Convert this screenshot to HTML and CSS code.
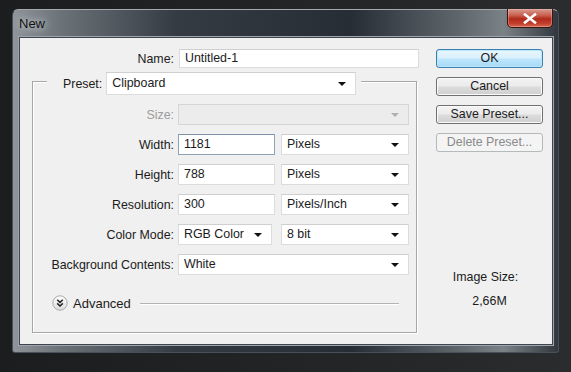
FILE: index.html
```html
<!DOCTYPE html>
<html lang="en">
<head>
    <meta charset="UTF-8">
    <title>New</title>
    <link rel="stylesheet" href="styles.css">
</head>
<body>
    <div class="window">
        <div class="titlebar">
            <span class="title">New</span>
            <div class="close">
                <svg width="14" height="11" viewBox="0 0 14 11">
                    <path d="M2 1.5 L12 9.5 M12 1.5 L2 9.5" stroke="#fff" stroke-width="2.6" stroke-linecap="square"/>
                </svg>
            </div>
        </div>

        <div class="client">
            <div class="form">
                <div class="name-row">
                    <span class="label">Name:</span>
                    <div class="field name-field">Untitled-1</div>
                </div>

                <div class="group">
                    <div class="preset">
                        <span class="label">Preset:</span>
                        <div class="field select preset-select">Clipboard</div>
                    </div>

                    <div class="rows">
                        <span class="label disabled">Size:</span>
                        <div class="field select span-2 is-disabled"></div>

                        <span class="label">Width:</span>
                        <div class="field num focused">1181</div>
                        <div class="field select">Pixels</div>

                        <span class="label">Height:</span>
                        <div class="field num">788</div>
                        <div class="field select">Pixels</div>

                        <span class="label">Resolution:</span>
                        <div class="field num">300</div>
                        <div class="field select">Pixels/Inch</div>

                        <span class="label">Color Mode:</span>
                        <div class="field select mode">RGB Color</div>
                        <div class="field select">8 bit</div>

                        <span class="label">Background Contents:</span>
                        <div class="field select span-2">White</div>
                    </div>

                    <div class="advanced">
                        <svg class="adv-icon" width="16" height="16" viewBox="0 0 16 16">
                            <defs>
                                <linearGradient id="advg" x1="0" y1="0" x2="0" y2="1">
                                    <stop offset="0" stop-color="#ffffff"/>
                                    <stop offset="1" stop-color="#dcdcdc"/>
                                </linearGradient>
                            </defs>
                            <circle cx="8" cy="8" r="7.2" fill="url(#advg)" stroke="#a9a9a9"/>
                            <path d="M5.2 4.8 L8 7.4 L10.8 4.8 M5.2 8.4 L8 11 L10.8 8.4" fill="none" stroke="#222" stroke-width="1.5"/>
                        </svg>
                        <span>Advanced</span>
                        <div class="adv-line"></div>
                    </div>
                </div>
            </div>

            <div class="side">
                <div class="btn primary">OK</div>
                <div class="btn">Cancel</div>
                <div class="btn">Save Preset...</div>
                <div class="btn is-disabled">Delete Preset...</div>

                <div class="info">
                    <div class="info-label">Image Size:</div>
                    <div class="info-value">2,66M</div>
                </div>
            </div>
        </div>
    </div>
</body>
</html>
```

FILE: styles.css
```css
body {
    margin: 0;
    background: linear-gradient(90deg, #1c1d1f 0%, #232527 60%, #2a2c2e 100%);
    font-family: "Liberation Sans", Arial, sans-serif;
    font-size: 12.4px;
    color: #1b1b1b;
    height: 372px;
    overflow: hidden;
}
.window {
    margin: 9px 0 0 12px;
    width: 547px;
    height: 344px;
    box-sizing: border-box;
    padding: 0 5px 8px 6px;
    border-radius: 6px 6px 3px 3px;
    border: 1px solid #4a5058;
    border-top-color: #a4a9ad;
    background: linear-gradient(90deg, #8f959a 0%, #6a7177 9%, #343b43 30%, #272d35 62%, #5f676d 82%, #7a8287 90%, #30373e 100%);
}
.titlebar {
    height: 27px;
    display: flex;
    align-items: flex-start;
    justify-content: space-between;
}
.title {
    margin: 6px 0 0 0;
    font-size: 13px;
    color: #111;
    text-shadow: 0 0 6px #c9cdd0, 0 0 10px #b5babd;
}
.close {
    width: 46px;
    height: 19px;
    margin: -1px 0 0 0;
    box-sizing: border-box;
    border: 1px solid #3c1612;
    border-top: none;
    border-radius: 0 0 5px 5px;
    background: linear-gradient(#d79b90 0%, #c9604f 35%, #b02a1b 55%, #c23e2c 80%, #d66a52 100%);
    box-shadow: inset 0 0 0 1px rgba(255, 210, 200, 0.35);
    display: flex;
    align-items: center;
    justify-content: center;
}
.client {
    height: 308px;
    box-sizing: border-box;
    background: #f0f0f0;
    border: 1px solid #3d4650;
    box-shadow: 0 0 0 1px #9ea4a9;
    display: flex;
    padding-top: 11px;
}
.form {
    width: 387px;
    margin-left: 12px;
}
.label {
    text-align: right;
    white-space: nowrap;
}
.label.disabled {
    color: #9c9c9c;
}
.name-row {
    display: grid;
    grid-template-columns: 142px 240px;
    column-gap: 5px;
    align-items: center;
}
.field {
    position: relative;
    height: 21px;
    box-sizing: border-box;
    background: #fff;
    border: 1px solid #dcdcdc;
    border-top-color: #cfcfcf;
    padding: 0 5px;
    line-height: 19px;
    white-space: nowrap;
}
.name-field {
    height: 19px;
    line-height: 17px;
}
.select::after {
    content: "";
    position: absolute;
    right: 9px;
    top: 8px;
    border-left: 4px solid transparent;
    border-right: 4px solid transparent;
    border-top: 4px solid #111;
}
.field.is-disabled {
    background: #ececec;
    border-color: #d6d6d6;
}
.field.is-disabled::after {
    border-top-color: #b0b0b0;
}
.focused {
    border-color: #8ea3b5;
    border-top-color: #7b93a8;
}
.group {
    margin-top: 13px;
    width: 385px;
    height: 252px;
    box-sizing: border-box;
    border: 1px solid #a6a6a6;
    box-shadow: inset 1px 1px 0 #fff, 1px 1px 0 #fff;
}
.preset {
    display: flex;
    width: fit-content;
    align-items: center;
    gap: 4px;
    margin: -10px 0 0 14px;
    padding: 0 5px 0 16px;
    background: #f0f0f0;
}
.preset-select {
    width: 250px;
    height: 23px;
    line-height: 21px;
    padding-left: 5px;
}
.preset-select::after {
    top: 9px;
}
.rows {
    margin-top: 9px;
    display: grid;
    grid-template-columns: 141px 99px 128px;
    grid-auto-rows: 21px;
    column-gap: 4px;
    row-gap: 9px;
    align-items: center;
}
.span-2 {
    grid-column: span 2;
}
.num {
    width: 97px;
}
.mode {
    width: 94px;
}
.advanced {
    margin: 20px 0 0 19px;
    display: flex;
    align-items: center;
    gap: 5px;
    font-size: 13px;
}
.adv-line {
    flex: 1;
    margin: 1px 17px 0 4px;
    height: 1px;
    background: #b4b4b4;
    box-shadow: 0 1px 0 #fff;
}
.side {
    width: 107px;
    margin-left: 17px;
    display: flex;
    flex-direction: column;
    gap: 9px;
}
.btn {
    height: 19px;
    box-sizing: border-box;
    border: 1px solid #707070;
    border-radius: 3px;
    background: linear-gradient(#f3f3f3 0%, #ebebeb 48%, #dcdcdc 52%, #cfcfcf 100%);
    box-shadow: inset 0 0 0 1px #fbfbfb;
    text-align: center;
    line-height: 17px;
}
.btn.primary {
    border-color: #3c7fb1;
    background: linear-gradient(#eaf6fd 0%, #d9f0fc 48%, #bee6fd 52%, #a7d9f5 100%);
    box-shadow: inset 0 0 0 1px #b9e8fa;
}
.btn.is-disabled {
    border-color: #b4b9bc;
    background: #f4f4f4;
    box-shadow: none;
    color: #8a8a8a;
}
.info {
    margin-top: 108px;
    text-align: center;
    line-height: 16px;
}
.info-label {
    padding-right: 8px;
}
.info-value {
    margin-top: 8px;
}
```
